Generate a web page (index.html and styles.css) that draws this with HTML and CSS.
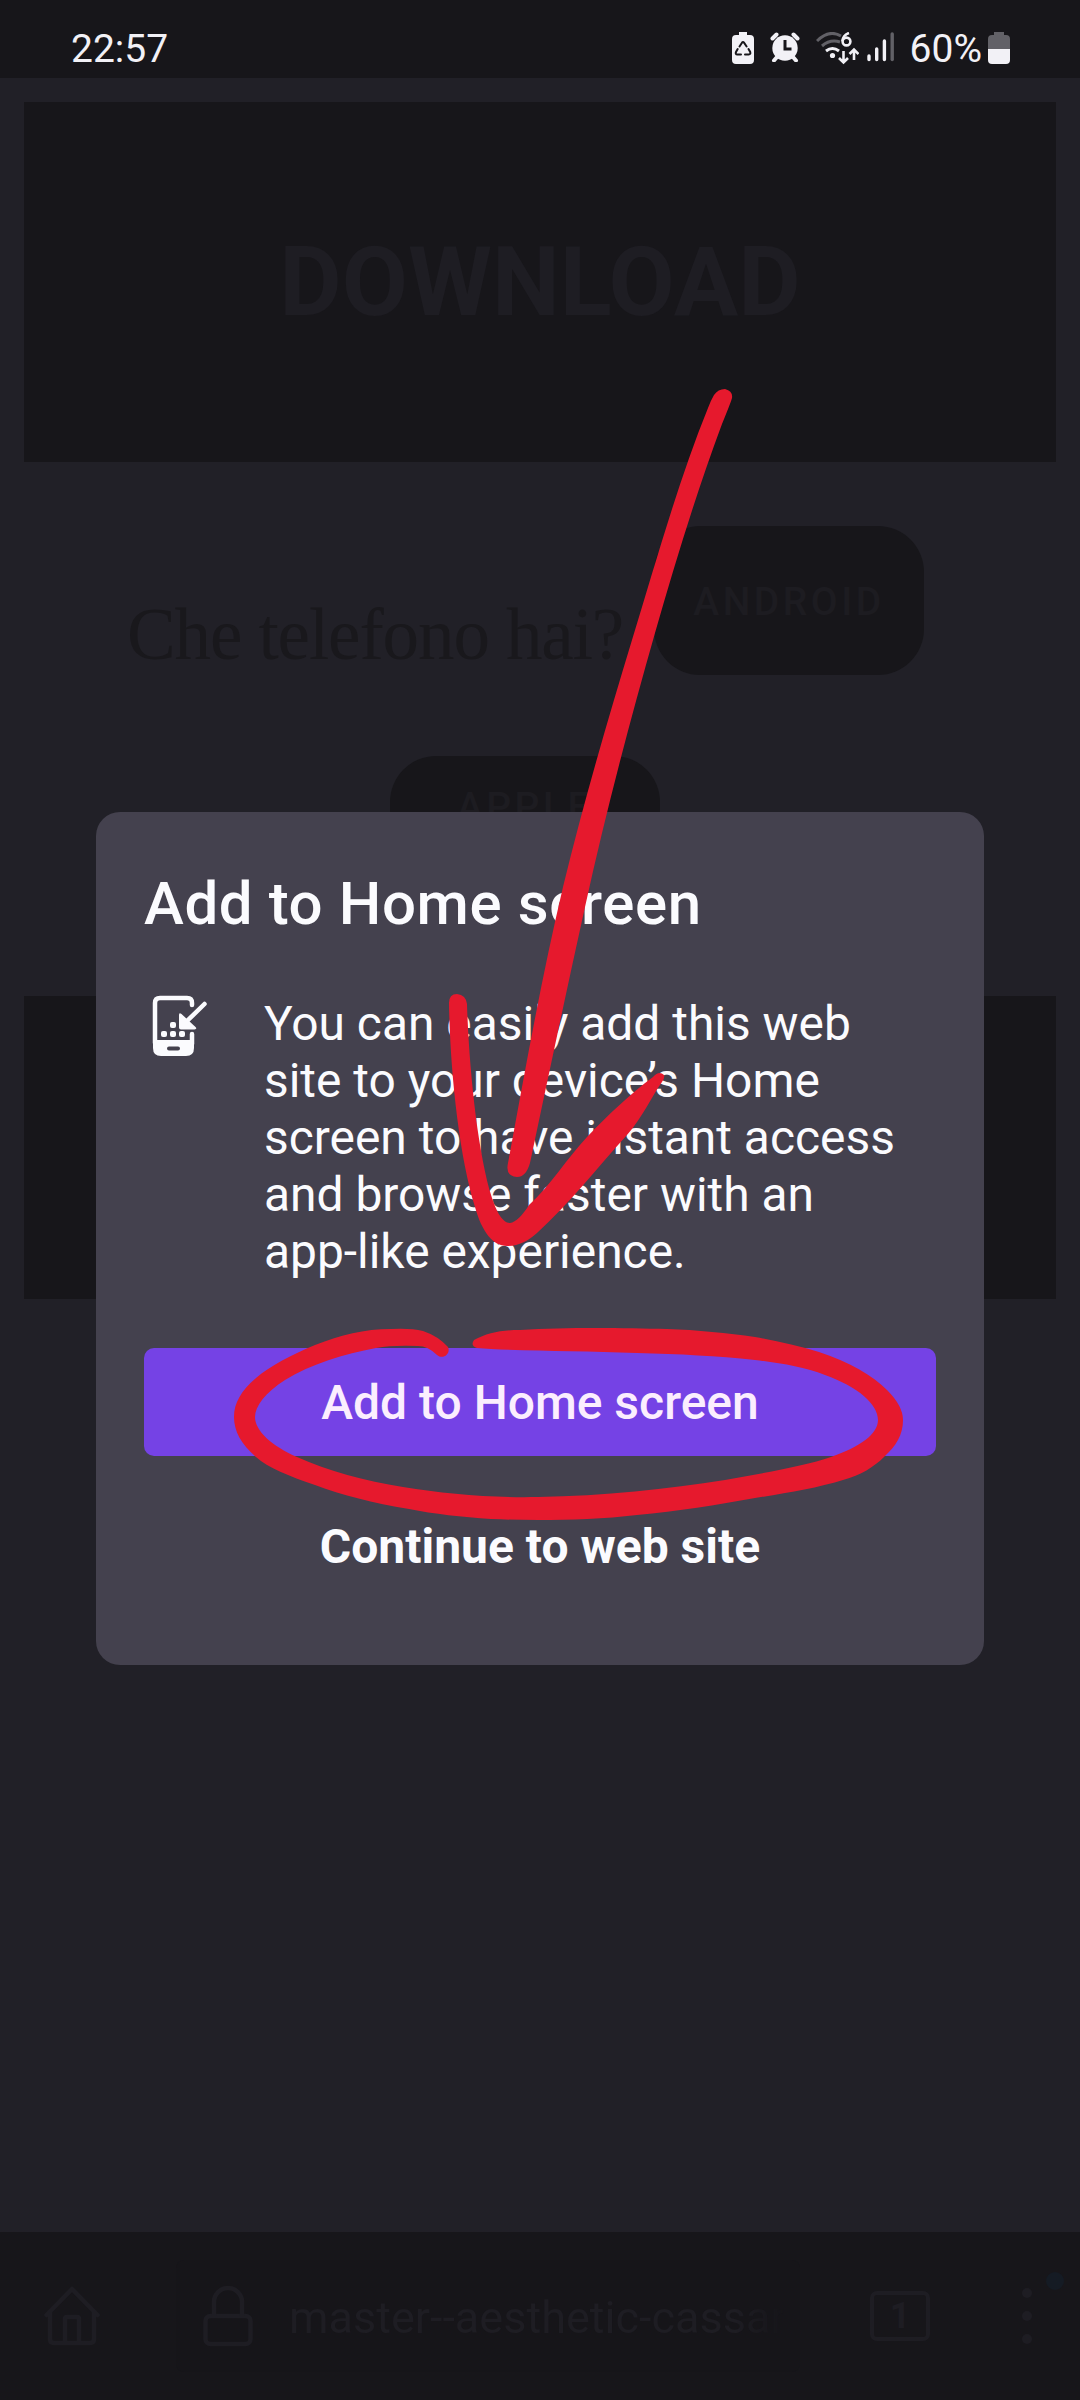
FILE: index.html
```html
<!DOCTYPE html>
<html lang="it">
<head>
<meta charset="utf-8">
<title>Add to Home screen</title>
<link rel="stylesheet" href="styles.css">
</head>
<body>
<div class="phone">
  <header class="status">
    <span class="clock">22:57</span>
    <div class="status-icons">
      <svg class="i-eco" width="22" height="32" viewBox="0 0 22 32"><path fill="#f2f1f6" d="M7 0h8v3h3a4 4 0 0 1 4 4v21a4 4 0 0 1-4 4H4a4 4 0 0 1-4-4V7a4 4 0 0 1 4-4h3z"/><g fill="none" stroke="#17161a" stroke-width="2" stroke-linecap="round"><path d="M7.5 14.5 10 10.7q1-1.4 2 0l2.6 3.8M16.5 17l1.7 3q.8 2.4-1.6 2.6H13M9 22.6H5.4Q3 22.400 4 20l1.700-3"/></g></svg>
      <svg class="i-alarm" width="30" height="30" viewBox="0 0 30 30"><g fill="none" stroke="#f2f1f6" stroke-linecap="round"><path stroke-width="4" d="m2.500 6.500 4-4M27.500 6.500l-4-4M7 25l-3 3.500M23 25l3 3.500"/></g><circle cx="15" cy="16" r="12.700" fill="#f2f1f6"/><path fill="none" stroke="#17161a" stroke-width="3" d="M15 8v9h6.500"/></svg>
      <svg class="i-wifi" width="43" height="33" viewBox="0 0 43 33"><g fill="none" stroke-width="3"><path stroke="#626167" d="M1 9Q13-3 25 4M6 14q8-7 18-4"/><path stroke="#f2f1f6" d="M10 19q6.500-5 13 0"/></g><circle cx="16.500" cy="23.500" r="2.600" fill="#f2f1f6"/><g fill="none" stroke="#f2f1f6" stroke-width="2.600"><circle cx="30.500" cy="9.500" r="3.900"/><path d="M33 1q-6 2-6.500 8M27.500 19v11M23 26l4.500 4.500L32 26M38 28V17.500M33.500 22l4.500-4.500 4.500 4.500"/></g></svg>
      <svg class="i-bars" width="28" height="30" viewBox="0 0 28 30"><g stroke-width="3.400" stroke-linecap="round" stroke="#f2f1f6"><path d="M2 24v3.500M9.700 17v10.500M17.400 9v18.500"/><path stroke="#626167" d="M25.200 2v25.500"/></g></svg>
      <span class="percent">60%</span>
      <svg class="i-batt" width="22" height="32" viewBox="0 0 22 32"><path fill="#626167" d="M6 0h10v3h2a4 4 0 0 1 4 4v10H0V7a4 4 0 0 1 4-4h2z"/><path fill="#f2f1f6" d="M0 17h22v11a4 4 0 0 1-4 4H4a4 4 0 0 1-4-4z"/></svg>
    </div>
  </header>

  <main class="page">
    <section class="hero"><h1 class="hero-title">DOWNLOAD</h1></section>
    <section class="choices">
      <p class="question">Che telefono hai?</p>
      <span class="pill">ANDROID</span>
    </section>
    <div class="choices-second"><span class="pill pill-short">APPLE</span></div>
    <section class="band"></section>
  </main>

  <nav class="toolbar">
    <svg class="i-home" width="56" height="60" viewBox="0 0 56 60"><path fill="none" stroke="#1e1d23" stroke-width="4.500" stroke-linejoin="round" stroke-linecap="round" d="M2.500 29 28 3l25.500 26M6 26v27q0 4 4 4h36q4 0 4-4V26M21 56V33q0-2 2-2h10q2 0 2 2v23"/></svg>
    <div class="address">
      <svg width="50" height="62" viewBox="0 0 50 62"><g fill="none" stroke="#1e1d23" stroke-width="4.500"><rect x="2.500" y="31" width="45" height="28" rx="5"/><path d="M11 31V17a14 14 0 0 1 28 0v14"/></g></svg>
      <span class="url">master--aesthetic-cassar</span>
    </div>
    <span class="tabs">1</span>
    <span class="menu"><i></i><i></i><i></i><b class="badge"></b></span>
  </nav>

  <div class="dialog">
    <h2 class="dialog-title">Add to Home screen</h2>
    <div class="dialog-body">
      <svg class="i-install" width="56" height="62" viewBox="0 0 56 62"><path fill="none" stroke="#fbfbfe" stroke-width="4.500" stroke-linecap="round" d="M40 10V8q0-5-5-5H8Q3 3 3 8v40M40 39v10"/><path fill="#fbfbfe" fill-rule="evenodd" d="M1 45h41v8q0 8-8 8H9q-8 0-8-8zm16 6.500q-2 0-2 2t2 2h9q2 0 2-2t-2-2z"/><path stroke="#fbfbfe" stroke-width="4.500" stroke-linecap="round" d="M52.500 9 34 27"/><path fill="#fbfbfe" d="M27 20q0-3 2.500-1l14 13q2 2-1 2.500H29q-2 0-2-2z"/><g fill="#fbfbfe"><rect x="18" y="27" width="6" height="6" rx="2"/><rect x="9" y="36" width="6" height="6" rx="2"/><rect x="18" y="36" width="6" height="6" rx="2"/><rect x="27" y="36" width="6" height="6" rx="2"/></g></svg>
      <p class="dialog-text">You can easily add this web<br>site to your device’s Home<br>screen to have instant access<br>and browse faster with an<br>app-like experience.</p>
    </div>
    <button class="btn-primary">Add to Home screen</button>
    <button class="btn-plain">Continue to web site</button>
  </div>

  <svg class="marks" width="1080" height="2400" viewBox="0 0 1080 2400">
    <g fill="#e6192d">
      <path d="M714 395Q718 389 725 389Q733 391 732 398Q731 402 722 424C696 494 675 563 655 633C629 724 605 816 585 907C566 993 548 1078 530 1163Q526 1177 517 1177Q505 1176 508 1163C525 1071 541 980 563 887C583 805 607 722 632 640C655 565 678 482 708 408Q711 400 714 395Z"/>
      <path d="M449 1003Q449 994 457 994Q466 995 467 1004C469 1070 478 1154 492 1198C496 1210 502 1223 510 1223C516 1222 522 1216 529 1205C550 1186 568 1157 587 1137C608 1115 630 1094 653 1077Q659 1070 664 1075Q665 1078 662 1082C652 1096 642 1118 627 1135C597 1168 568 1205 537 1233C528 1241 519 1246 507 1246C493 1246 482 1232 475 1207C459 1155 450 1070 449 1003Z"/>
      <path d="M437 1355Q428 1346 418 1346Q392 1345 376 1348C344 1354 311 1364 285 1380C265 1393 255 1406 255 1417C255 1431 272 1446 297 1457C328 1471 365 1481 403 1487C446 1494 492 1498 538 1497C604 1496 668 1489 725 1480C764 1473 805 1466 831 1457C860 1447 878 1434 878 1420C878 1404 858 1387 825 1375C804 1367 780 1363 755 1360C717 1356 680 1354 637 1353C586 1351 536 1351 491 1349L477 1348Q470 1346 474 1340C487 1333 502 1330 520 1330C568 1327 624 1328 667 1329C697 1330 728 1333 755 1337C777 1341 799 1346 819 1352C850 1362 873 1376 887 1390Q903 1406 903 1420C903 1435 896 1446 884 1457C874 1467 861 1475 843 1480C817 1488 787 1493 755 1498C717 1505 678 1511 637 1515C605 1519 570 1520 538 1520Q514 1520 491 1519C462 1517 434 1514 409 1509C373 1503 342 1495 315 1485C289 1476 268 1468 256 1457C241 1444 234 1431 234 1417C234 1403 241 1391 256 1378C270 1366 291 1355 315 1345C341 1335 364 1329 391 1329Q411 1328 423 1331Q438 1336 448 1347C451 1354 443 1360 437 1355Z"/>
    </g>
  </svg>
</div>
</body>
</html>
```
FILE: styles.css
```css
* { box-sizing: border-box; }
body { margin: 0; background: #22212a; font-family: Roboto, "Liberation Sans", sans-serif; }
h1, h2, p { margin: 0; }
svg { display: block; flex: none; }

.phone { position: relative; width: 1080px; height: 2400px; overflow: hidden; display: flex; flex-direction: column; background: #212027; }

.status { height: 78px; flex: none; display: flex; justify-content: space-between; padding: 0 70px 0 71px; background: #17161a; color: #f2f1f6; font-size: 39px; line-height: 98px; }
.status-icons { display: flex; align-items: flex-start; }
.status-icons svg { margin-top: 32px; }
.i-alarm { margin-left: 16px; }
.i-wifi { margin-left: 16px; }
.i-bars { margin-left: 8px; }
.percent { margin: 0 -1px 0 15px; }
.i-batt { margin-left: 7px; }

.page { flex: 1; padding: 24px; display: flex; flex-direction: column; }
.hero { height: 360px; background: #17161a; display: flex; align-items: center; justify-content: center; }
.hero-title { color: #1e1d23; font-size: 96px; line-height: 114px; font-weight: 700; }
.choices { height: 149px; display: flex; align-items: flex-start; justify-content: space-between; margin: 64px 132px 0 103px; }
.question { font-family: "Liberation Serif", serif; font-size: 73px; line-height: 80px; letter-spacing: -1.1px; color: #19181c; padding-top: 69px; white-space: nowrap; }
.pill { width: 270px; height: 149px; border-radius: 46px; background: #17161a; color: #1d1c21; font-size: 39px; font-weight: 500; letter-spacing: 3.500px; padding-top: 2px; display: flex; align-items: center; justify-content: center; }
.pill-short { height: 100px; }
.choices-second { padding: 81px 0 0 366px; }
.band { height: 303px; margin-top: 140px; background: #17161a; }

.toolbar { height: 168px; flex: none; display: flex; align-items: center; background: #17161a; color: #1e1d23; }
.i-home { margin-left: 44px; }
.address { width: 624px; height: 112px; margin-left: 76px; padding-left: 27px; display: flex; align-items: center; gap: 36px; background: #161519; border-radius: 8px; }
.url { padding-top: 2px; white-space: nowrap; font-size: 45px; -webkit-mask-image: linear-gradient(90deg, #000 90%, transparent); mask-image: linear-gradient(90deg, #000 90%, transparent); }
.tabs { width: 60px; height: 50px; margin-left: 70px; border: 4px solid #1e1d23; border-radius: 7px; font-size: 36px; font-weight: 700; display: flex; align-items: center; justify-content: center; }
.menu { position: relative; margin-left: 92px; display: flex; flex-direction: column; gap: 13px; }
.menu i { width: 10px; height: 10px; border-radius: 50%; background: #1e1d23; }
.badge { position: absolute; left: 24px; top: -16px; width: 18px; height: 18px; border-radius: 50%; background: #151b24; }

.dialog { position: absolute; left: 96px; top: 812px; width: 888px; height: 853px; padding: 55px 48px 0; border-radius: 24px; background: #44414e; color: #fbfbfe; }
.dialog-title { font-size: 60px; letter-spacing: .6px; line-height: 72px; font-weight: 500; white-space: nowrap; padding-top: 1px; }
.dialog-body { display: flex; margin-top: 55px; padding-left: 8px; }
.dialog-text { margin: 1px 0 -1px 56px; font-size: 47.900px; line-height: 56.900px; white-space: nowrap; }
.btn-primary, .btn-plain { display: block; width: 792px; height: 108px; padding: 2px 0 0; border: 0; border-radius: 10px; font: 500 48px/106px Roboto, "Liberation Sans", sans-serif; color: #fbeefe; }
.btn-primary { margin-top: 68px; background: #7542e5; }
.btn-plain { margin-top: 36px; background: none; color: #fbfbfe; font-weight: 700; }

.marks { position: absolute; left: 0; top: 0; }
```
